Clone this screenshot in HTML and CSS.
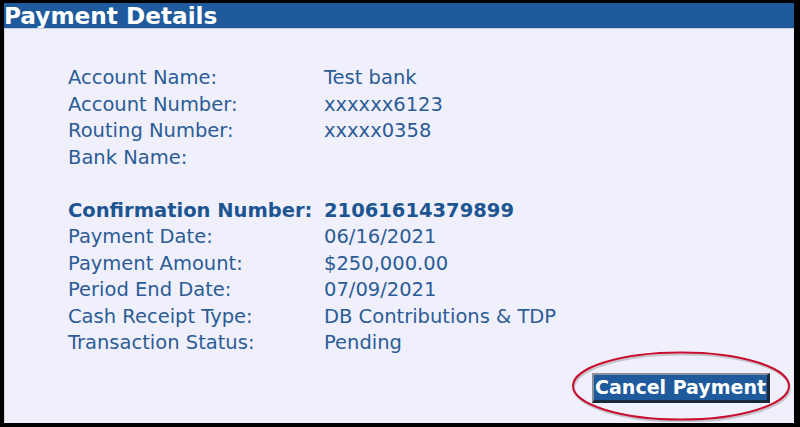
FILE: index.html
```html
<!DOCTYPE html>
<html>
<head>
<meta charset="utf-8">
<link rel="stylesheet" href="styles.css">
</head>
<body>
<div class="frame">
  <div class="header">Payment Details</div>
  <div class="content">
    <div class="details">
      <div class="label">Account Name:</div><div class="value">Test bank</div>
      <div class="label">Account Number:</div><div class="value">xxxxxx6123</div>
      <div class="label">Routing Number:</div><div class="value">xxxxx0358</div>
      <div class="label">Bank Name:</div><div class="value"></div>
      <div class="spacer"></div>
      <div class="label strong">Confirmation Number:</div><div class="value strong">21061614379899</div>
      <div class="label">Payment Date:</div><div class="value">06/16/2021</div>
      <div class="label">Payment Amount:</div><div class="value">$250,000.00</div>
      <div class="label">Period End Date:</div><div class="value">07/09/2021</div>
      <div class="label">Cash Receipt Type:</div><div class="value">DB Contributions &amp; TDP</div>
      <div class="label">Transaction Status:</div><div class="value">Pending</div>
    </div>
    <div class="actions">
      <div class="btn-wrap">
        <button class="btn">Cancel Payment</button>
        <svg class="circle" width="222" height="72" viewBox="0 0 222 72">
          <ellipse cx="111" cy="36" rx="108" ry="33.5" fill="none" stroke="rgba(0,0,0,0.18)" stroke-width="2" transform="translate(1,2)"/>
          <ellipse cx="111" cy="36" rx="108" ry="33.5" fill="none" stroke="#c8102e" stroke-width="2"/>
        </svg>
      </div>
    </div>
  </div>
</div>
</body>
</html>
```
FILE: styles.css
```css
html, body {
  margin: 0;
  padding: 0;
  background: #000;
}
.frame {
  width: 790px;
  height: 420px;
  border-style: solid;
  border-color: #000;
  border-width: 3px 6px 4px 4px;
  background: #f0f0fc;
  font-family: "DejaVu Sans", Verdana, sans-serif;
  display: flex;
  flex-direction: column;
}
.header {
  height: 25px;
  background: #1f5b9c;
  color: #fff;
  font-weight: bold;
  font-size: 23.2px;
  line-height: 25px;
  padding-left: 0;
  border-bottom: 1px solid #c9d3e6;
  white-space: nowrap;
  overflow: hidden;
}
.content {
  flex: 1;
  padding: 36px 24px 0 63px;
  border-left: 1px solid #d4d4e0;
  display: flex;
  flex-direction: column;
}
.details {
  display: grid;
  grid-template-columns: 256px auto;
  grid-auto-rows: 26.5px;
  color: #2b5c96;
  font-size: 19.5px;
  line-height: 26.5px;
  white-space: nowrap;
}
.spacer {
  grid-column: 1 / 3;
}
.strong {
  font-weight: bold;
  color: #1d5592;
}
.actions {
  display: flex;
  justify-content: flex-end;
  margin-top: 16px;
}
.btn-wrap {
  position: relative;
}
.btn {
  font-family: "DejaVu Sans", Verdana, sans-serif;
  font-weight: bold;
  font-size: 19px;
  color: #fff;
  background: #1f5b9c;
  border-style: solid;
  border-width: 2px 3px 3px 2px;
  border-color: #8a8f99 #1a2a3a #1a2a3a #8a8f99;
  padding: 0 1px;
  height: 30px;
  line-height: 24px;
  margin: 0;
  display: block;
}
.circle {
  position: absolute;
  left: -22px;
  top: -23px;
  pointer-events: none;
}
```
